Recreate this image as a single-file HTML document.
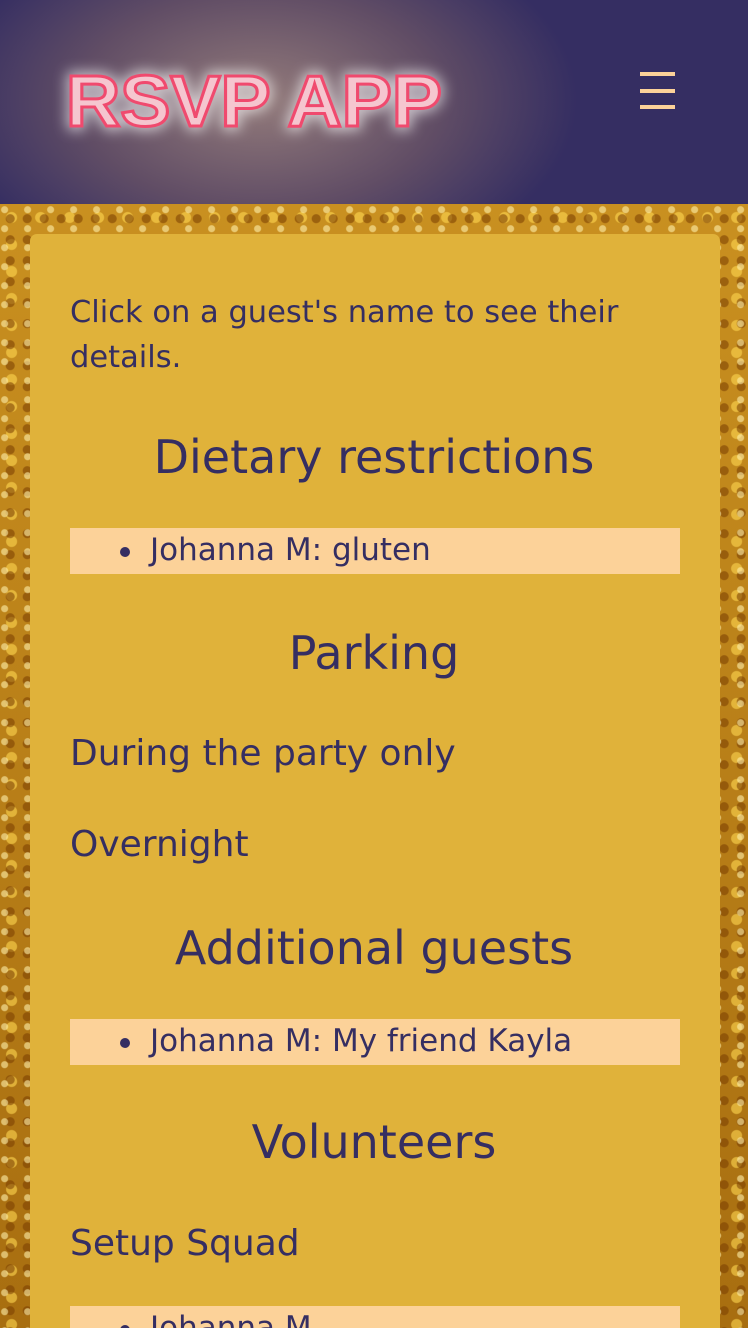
<!DOCTYPE html>
<html><head><style>
html,body{margin:0;width:748px;height:1328px;overflow:hidden}
body{position:relative;font-family:"DejaVu Sans","Liberation Sans",sans-serif;color:#352e62;background:#b07a10;}
.glit{position:absolute;left:0;top:204px;width:748px;height:1124px;
background:
radial-gradient(circle at 20% 30%,rgba(255,240,170,.6) 0 3px,transparent 4px) 0 0/23px 19px,
radial-gradient(circle at 60% 70%,rgba(120,60,0,.55) 0 4px,transparent 5px) 0 0/17px 21px,
radial-gradient(circle at 40% 50%,rgba(255,215,80,.6) 0 5px,transparent 6px) 0 0/29px 27px,
linear-gradient(#c99020,#a86e10);}
header{position:absolute;left:0;top:0;width:748px;height:204px;background:#352e62;overflow:hidden}
.glow{position:absolute;left:-60px;top:-90px;width:640px;height:380px;background:radial-gradient(ellipse at center,rgba(210,175,140,.6) 0%,rgba(150,115,105,.45) 40%,rgba(53,46,98,0) 70%)}
.menu{position:absolute;left:640px;width:35px;height:4px;background:#fcd299}
.card{position:absolute;left:30px;top:234px;width:690px;height:1120px;background:#e0b23a;border-radius:7px}
.t{position:absolute;white-space:nowrap}
.h{font-size:46px;left:0;width:748px;text-align:center}
.bar{position:absolute;left:70px;width:610px;height:46px;background:#fcd299}
.bar span{position:absolute;left:80px;top:4px;font-size:31px}
.bar i{position:absolute;left:50px;top:19px;width:10px;height:10px;border-radius:50%;background:#352e62}
</style></head><body>
<div class="glit"></div>
<header><div class="glow"></div>
<svg style="position:absolute;left:0;top:0" width="748" height="204">
<defs><filter id="f"><feGaussianBlur stdDeviation="7"/></filter></defs>
<text x="66" y="126" textLength="376" lengthAdjust="spacingAndGlyphs" font-family="Liberation Sans" font-weight="bold" font-size="72" fill="none" stroke="#fff" stroke-width="6" filter="url(#f)" opacity=".9">RSVP APP</text>
<text x="66" y="126" textLength="376" lengthAdjust="spacingAndGlyphs" font-family="Liberation Sans" font-weight="bold" font-size="72" fill="#f5c6cf" stroke="#f04a6e" stroke-width="3">RSVP APP</text>
</svg>
<div class="menu" style="top:72px"></div><div class="menu" style="top:89px"></div><div class="menu" style="top:105px"></div>
</header>
<div class="card"></div>
<div class="t" style="left:70px;top:290px;font-size:30.5px;line-height:45px">Click on a guest's name to see their<br>details.</div>
<div class="t h" style="top:430px">Dietary restrictions</div>
<div class="bar" style="top:528px"><i></i><span>Johanna M: gluten</span></div>
<div class="t h" style="top:626px">Parking</div>
<div class="t" style="left:70px;top:733px;font-size:36px">During the party only</div>
<div class="t" style="left:70px;top:824px;font-size:36px">Overnight</div>
<div class="t h" style="top:921px">Additional guests</div>
<div class="bar" style="top:1019px"><i></i><span>Johanna M: My friend Kayla</span></div>
<div class="t h" style="top:1115px">Volunteers</div>
<div class="t" style="left:70px;top:1223px;font-size:36px">Setup Squad</div>
<div class="bar" style="top:1306px"><i></i><span>Johanna M</span></div>
</body></html>
